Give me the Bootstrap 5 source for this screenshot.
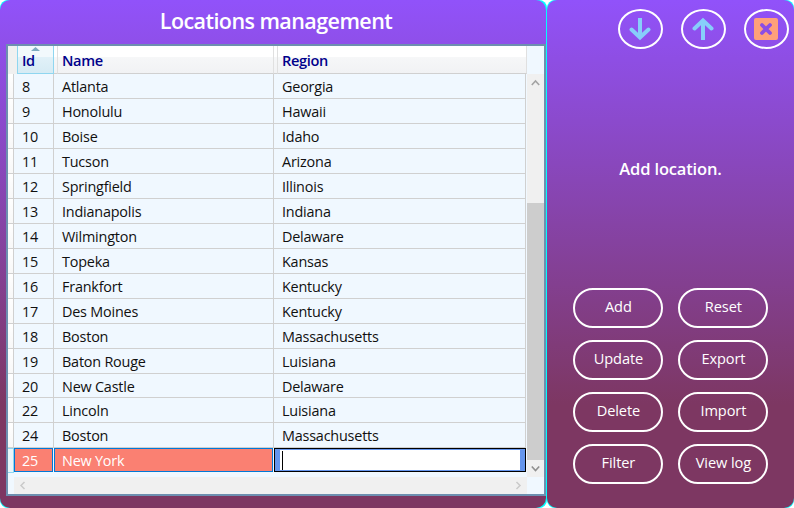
<!DOCTYPE html>
<html lang="en">
<head>
<meta charset="utf-8">
<title>Locations management</title>
<link href="https://cdn.jsdelivr.net/npm/bootstrap@5.3.0/dist/css/bootstrap.min.css" rel="stylesheet">
<style>
body{width:794px;height:508px;font-family:"Open Sans","Noto Sans",sans-serif;font-size:14.4px;letter-spacing:-.2px;background:#fff;overflow:hidden}
.shell{border-radius:8px;background:#00ffff;height:508px}
.shell-left{width:547px;padding-right:1px}
.shell-right{width:247px}
.fill{height:508px;border-radius:10px;background:linear-gradient(#9152fa 0,#7d3762 405px)}
.title{height:44px;font-size:21.5px;line-height:42px;padding-left:6px;letter-spacing:-.57px}
.grid-box{margin-left:6px;width:540px;height:452px;border:2px solid #6d8fb0;background:#f0f8ff}
.head{height:28px;color:#00008b;line-height:29px;background:linear-gradient(#fff 0 11px,#f6f7f8 11px,#f1f2f4 27px);font-size:14.6px;letter-spacing:-.35px}
.head>div{border-bottom:1px solid #d0d0d0}
.corner{width:9px;background:#f0f0f0;border:0!important}
.head .h-id{width:37px;padding-left:4px;border:1px solid #8fd6f0;border-top:0;background:linear-gradient(#f2f9fc 0 11px,#e1f1f8 11px,#d6ebf4)}
.h-name{width:216px;padding-left:4px;border-right:1px solid #e0e0e0}
.h-region{width:249px;padding-left:4px;border-right:1px solid #e0e0e0}
.gap-line{width:4px;border-right:1px solid #e0e0e0}
.h-end{width:17px;background:#f0f8ff;border:0!important}
.sort{left:13px;top:1px}
.rows{width:519px;height:403px;padding-top:.1px}
.line{height:24.955px;line-height:25px;color:#101010}
.line>div{border-right:1px solid #d0d0d0;border-bottom:1px solid #d0d0d0;padding-left:8px}
.line .rh{width:6px;padding:0;background:linear-gradient(#fff,#f8f8f8)}
.c-id{width:40px}.c-name{width:220px}.c-region{width:252px}
.line.picked{color:#fff}
.picked .rh{border-color:#8fd6f0;border-top:1px solid #8fd6f0;background:#eaf6fb}
.line.picked .c-id,.line.picked .c-name{background:#fa8072;border:1px solid #0078d7;padding-left:7px;line-height:23px;height:24px}
.line.picked .c-id{width:39px;margin-right:1px}
.line.picked .c-name{width:219px;margin-right:1px}
.line.picked .c-region{height:24px;border:1px solid #000;background:#6495ed;padding:1px 5px}
.edit{height:20px;background:#fff;padding:1px 2px}
.caret{width:1px;height:19px;background:#000}
.vscroll{width:17px;height:403px;background:#f0f0f0}
.thumb{height:257px;margin-top:112px;background:#cdcdcd}
.hscroll{height:17px;width:513px;margin-left:6px;background:#f0f0f0}
.tools{padding:9px 5.5px 0 0;gap:18px}
.round-btn{width:45px;height:40px;border:2px solid #fff;border-radius:50%;padding:0}
.message{height:241px;font-size:16.5px;letter-spacing:-.16px}
.actions{display:grid;grid-template-columns:90px 90px;grid-auto-rows:40px;gap:12px 15px;padding:0 0 0 26.4px;margin-top:-2px}
.act{border:2px solid #fff;border-radius:20px;padding:0 0 4px;font-size:14.6px;line-height:20px;color:#fff;letter-spacing:-.1px}
</style>
</head>
<body>
<main class="d-flex">
<section class="shell shell-left">
<div class="fill">
<h1 class="title text-white text-center fw-semibold m-0">Locations management</h1>
<div class="grid-box">
<div class="head d-flex fw-semibold">
<div class="corner"></div>
<div class="h-id position-relative">Id<svg class="sort position-absolute d-block" width="9" height="5"><path d="M0 4L4.5 0 9 4Z" fill="#7dabc0"/></svg></div>
<div class="gap-line"></div>
<div class="h-name">Name</div>
<div class="gap-line"></div>
<div class="h-region">Region</div>
<div class="h-end ms-auto"></div>
</div>
<div class="d-flex">
<div class="rows" id="rows"></div>
<div class="vscroll d-flex flex-column align-items-center justify-content-between">
<svg width="17" height="17" fill="none" stroke="#a3a3a3" stroke-width="1.6"><path d="M4.8 11L8.5 7 12.2 11"/></svg>
<div class="thumb w-100"></div>
<svg width="17" height="17" fill="none" stroke="#8f8f8f" stroke-width="1.6"><path d="M4.8 6.5L8.5 10.5 12.2 6.5"/></svg>
</div>
</div>
<div class="hscroll d-flex justify-content-between">
<svg width="17" height="17" fill="none" stroke="#cacaca" stroke-width="1.5"><path d="M10.5 5L7 8.5 10.5 12"/></svg>
<svg width="17" height="17" fill="none" stroke="#cacaca" stroke-width="1.5"><path d="M6.5 5L10 8.5 6.5 12"/></svg>
</div>
</div>
</div>
</section>
<aside class="shell shell-right">
<div class="fill">
<div class="tools d-flex justify-content-end">
<button class="round-btn btn d-flex align-items-center justify-content-center" aria-label="Down"><svg width="22" height="24" fill="none" stroke="#87cefa" stroke-width="4"><path d="M11 1V20" /><path d="M2.5 12.5L11 20.5 19.5 12.5" stroke-linecap="round"/></svg></button>
<button class="round-btn btn d-flex align-items-center justify-content-center" aria-label="Up"><svg width="22" height="24" fill="none" stroke="#87cefa" stroke-width="4"><path d="M11 23V4"/><path d="M2.5 11.5L11 3.5 19.5 11.5" stroke-linecap="round"/></svg></button>
<button class="round-btn btn d-flex align-items-center justify-content-center" aria-label="Close"><svg width="24" height="22"><rect width="24" height="22" rx="2" fill="#ffa07a"/><path d="M8 7L16 15M16 7L8 15" stroke="#8c4de5" stroke-width="3.8" stroke-linecap="round"/></svg></button>
</div>
<div class="message d-flex align-items-center justify-content-center text-white fw-semibold">Add location.</div>
<div class="actions">
<button class="act btn">Add</button><button class="act btn">Reset</button>
<button class="act btn">Update</button><button class="act btn">Export</button>
<button class="act btn">Delete</button><button class="act btn">Import</button>
<button class="act btn">Filter</button><button class="act btn">View log</button>
</div>
</div>
</aside>
</main>
<script src="https://cdn.jsdelivr.net/npm/bootstrap@5.3.0/dist/js/bootstrap.bundle.min.js"></script>
<script>
const data=[[8,"Atlanta","Georgia"],[9,"Honolulu","Hawaii"],[10,"Boise","Idaho"],[11,"Tucson","Arizona"],[12,"Springfield","Illinois"],[13,"Indianapolis","Indiana"],[14,"Wilmington","Delaware"],[15,"Topeka","Kansas"],[16,"Frankfort","Kentucky"],[17,"Des Moines","Kentucky"],[18,"Boston","Massachusetts"],[19,"Baton Rouge","Luisiana"],[20,"New Castle","Delaware"],[22,"Lincoln","Luisiana"],[24,"Boston","Massachusetts"],[25,"New York",null]];
document.getElementById("rows").innerHTML=data.map(([id,n,r])=>`<div class="line d-flex${r===null?" picked":""}"><div class="rh"></div><div class="c-id">${id}</div><div class="c-name">${n}</div><div class="c-region">${r===null?'<div class="edit"><div class="caret"></div></div>':r}</div></div>`).join("");
</script>
</body>
</html>
